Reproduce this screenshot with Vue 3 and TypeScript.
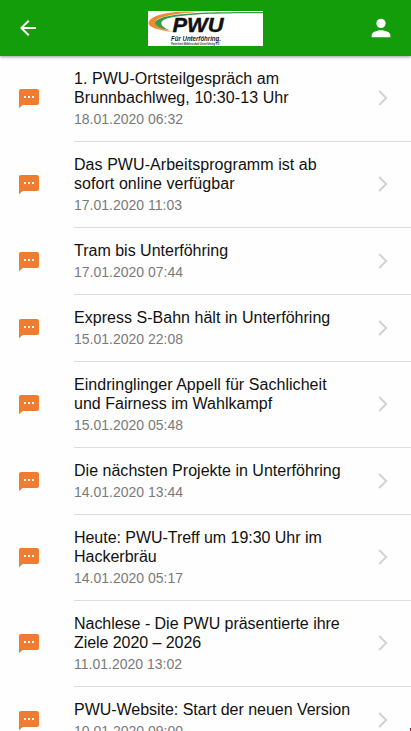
<script setup lang="ts">
interface NewsLine {
  text: string
  tracking: number
}

interface NewsItem {
  lines: NewsLine[]
  date: string
}

const items: NewsItem[] = [
  {
    lines: [
      { text: '1. PWU-Ortsteilgespräch am', tracking: 0.06 },
      { text: 'Brunnbachlweg, 10:30-13 Uhr', tracking: 0.08 },
    ],
    date: '18.01.2020 06:32',
  },
  {
    lines: [
      { text: 'Das PWU-Arbeitsprogramm ist ab', tracking: 0.06 },
      { text: 'sofort online verfügbar', tracking: 0.06 },
    ],
    date: '17.01.2020 11:03',
  },
  { lines: [{ text: 'Tram bis Unterföhring', tracking: 0 }], date: '17.01.2020 07:44' },
  { lines: [{ text: 'Express S-Bahn hält in Unterföhring', tracking: 0.03 }], date: '15.01.2020 22:08' },
  {
    lines: [
      { text: 'Eindringlinger Appell für Sachlicheit', tracking: 0.05 },
      { text: 'und Fairness im Wahlkampf', tracking: 0.02 },
    ],
    date: '15.01.2020 05:48',
  },
  { lines: [{ text: 'Die nächsten Projekte in Unterföhring', tracking: 0.02 }], date: '14.01.2020 13:44' },
  {
    lines: [
      { text: 'Heute: PWU-Treff um 19:30 Uhr im', tracking: -0.04 },
      { text: 'Hackerbräu', tracking: 0 },
    ],
    date: '14.01.2020 05:17',
  },
  {
    lines: [
      { text: 'Nachlese - Die PWU präsentierte ihre', tracking: -0.03 },
      { text: 'Ziele 2020 – 2026', tracking: -0.06 },
    ],
    date: '11.01.2020 13:02',
  },
  { lines: [{ text: 'PWU-Website: Start der neuen Version', tracking: -0.03 }], date: '10.01.2020 09:00' },
]
</script>

<template>
  <div class="screen">
    <header class="bar">
      <button class="action" aria-label="Zurück">
        <svg width="24" height="24" viewBox="0 0 24 24"><path d="M20 11H7.830l5.590-5.590L12 4l-8 8 8 8 1.410-1.410L7.830 13H20z" fill="#fff" /></svg>
      </button>
      <svg class="logo" width="115" height="35" viewBox="0 0 115 35">
        <rect width="115" height="35" fill="#fff" />
        <path d="M25 21C9 19 0 16 .5 12C1 6 14 .8 38 .4H58C38 1.200 18 3.500 10 8C4 12 10 17 25 21Z" fill="#f08a35" />
        <path d="M22 19.500C10 17 5 13.500 8 10C14 3.500 42 .6 115 1V2.300C70 2 36 3 19 7.500C11 10 11 15 22 19.500Z" fill="#399b45" />
        <text class="logo-name" x="24.500" y="21" textLength="51" lengthAdjust="spacingAndGlyphs">PWU</text>
        <text class="logo-place" x="23" y="30" textLength="50" lengthAdjust="spacingAndGlyphs">Für Unterföhring.</text>
        <text class="logo-line" x="23" y="34.200" textLength="49" lengthAdjust="spacingAndGlyphs">Parteifreie Wählerschaft Unterföhring e.V.</text>
      </svg>
      <button class="action" aria-label="Profil">
        <svg width="28" height="28" viewBox="0 0 24 24"><path d="M12 12a4 4 0 1 0 0-8 4 4 0 0 0 0 8zm0 2c-2.670 0-8 1.340-8 4v2h16v-2c0-2.660-5.330-4-8-4z" fill="#fff" /></svg>
      </button>
    </header>

    <ul class="list">
      <li v-for="item in items" :key="item.date" class="row">
        <svg class="bubble" width="24" height="24" viewBox="0 0 24 24">
          <path d="M20 2H4c-1.100 0-2 .9-2 2v17.300l3.700-3.300H20c1.100 0 2-.9 2-2V4c0-1.100-.9-2-2-2z" fill="#f07c31" />
          <path d="M7 9h2v2H7zm4 0h2v2h-2zm4 0h2v2h-2z" fill="#fff" />
        </svg>
        <div class="body">
          <div class="copy">
            <h2 class="title">
              <span v-for="line in item.lines" :key="line.text" :style="{ letterSpacing: line.tracking + 'px' }">{{ line.text }}</span>
            </h2>
            <p class="date">{{ item.date }}</p>
          </div>
          <svg class="chevron" width="10" height="16" viewBox="0 0 10 16"><path d="M1.200 1l7 7-7 7" fill="none" stroke="#d3d3d5" stroke-width="2" /></svg>
        </div>
      </li>
    </ul>
    <span class="corner" />
  </div>
</template>

<style>
body {
  background: #fff;
  overflow: hidden;
}
</style>

<style scoped>
.screen {
  position: relative;
  display: flex;
  flex-direction: column;
  width: 411px;
  height: 731px;
  overflow: hidden;
  background: #fefefe;
  font-family: "Liberation Sans", Arial, sans-serif;
}
.bar {
  display: flex;
  flex: none;
  align-items: center;
  justify-content: space-between;
  box-sizing: border-box;
  height: 56px;
  padding: 0 14px 0 12px;
  background: #149d0a;
  box-shadow: 0 1px 3px rgba(0, 0, 0, 0.4);
  z-index: 1;
}
.action {
  display: flex;
  align-items: center;
  justify-content: center;
  width: 32px;
  height: 40px;
  padding: 0;
  border: 0;
  background: none;
}
.logo {
  display: block;
  margin-left: 1px;
}
.logo-name {
  font: italic bold 19.5px "Liberation Sans", sans-serif;
  fill: #111;
  stroke: #111;
  stroke-width: 0.4px;
}
.logo-place {
  font: italic bold 7.5px "Liberation Sans", sans-serif;
  fill: #222;
}
.logo-line {
  font: italic bold 2.7px "Liberation Sans", sans-serif;
  fill: #333;
}
.list {
  flex: none;
  margin: 0;
  padding: 0;
  list-style: none;
}
.row {
  display: flex;
  align-items: center;
  padding-left: 17px;
}
.bubble {
  flex: none;
  margin-right: 33px;
}
.body {
  display: flex;
  flex: 1;
  align-items: center;
  justify-content: space-between;
  padding: 13px 23px 14px 0;
  border-bottom: 1px solid #dcdcde;
}
.title {
  margin: 0;
  font-size: 16px;
  font-weight: 400;
  line-height: 19px;
  color: #111;
}
.title span {
  display: block;
  white-space: nowrap;
}
.date {
  margin: 4px 0 0;
  font-size: 14px;
  line-height: 16px;
  color: #7a7a7a;
}
.chevron {
  flex: none;
}
.corner {
  position: absolute;
  right: 0;
  bottom: 0;
  width: 1px;
  height: 3px;
  background: linear-gradient(#2b1d72 34%, #d8202c 34%);
}
</style>
